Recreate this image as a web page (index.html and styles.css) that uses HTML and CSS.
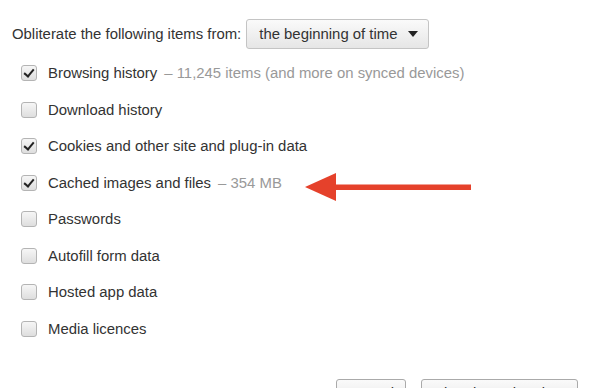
FILE: index.html
```html
<!DOCTYPE html>
<html lang="en-US">
<head>
    <meta charset="utf-8"/>
    <meta name="viewport" content="width=device-width, initial-scale=1"/>
    <title>Clear browsing data</title>
    <link rel="stylesheet" href="styles.css">
</head>
<body>
    <div class="dialog">
        <div class="period-row">
            <span class="period-label">Obliterate the following items from:</span>
            <div class="select">
                <span>the beginning of time</span>
                <span class="caret"></span>
            </div>
        </div>

        <ul class="items">
            <li class="item"><span class="box checked"></span>Browsing history<span class="note">&ndash; 11,245 items (and more on synced devices)</span></li>
            <li class="item"><span class="box"></span>Download history</li>
            <li class="item"><span class="box checked"></span>Cookies and other site and plug-in data</li>
            <li class="item"><span class="box checked"></span>Cached images and files<span class="note">&ndash; 354 MB</span></li>
            <li class="item"><span class="box"></span>Passwords</li>
            <li class="item"><span class="box"></span>Autofill form data</li>
            <li class="item"><span class="box"></span>Hosted app data</li>
            <li class="item"><span class="box"></span>Media licences</li>
        </ul>

        <div class="buttons">
            <button class="button cancel">Cancel</button>
            <button class="button clear">Clear browsing data</button>
        </div>

        <svg class="arrow" width="170" height="34" viewBox="0 0 170 34">
            <polygon points="0,17 31,3 31,31" fill="#e5412b"/>
            <rect x="28" y="14.5" width="138" height="5.5" fill="#e5412b"/>
        </svg>
    </div>
</body>
</html>
```

FILE: styles.css
```css
html, body {
    margin: 0;
    height: 100%;
    overflow: hidden;
    background: #fff;
}

body {
    font-family: "Liberation Sans", Arial, sans-serif;
    font-size: 14.9px;
    color: #333;
}

.dialog {
    position: relative;
    height: 100%;
}

.period-row {
    display: flex;
    align-items: center;
    gap: 5px;
    padding: 19px 0 0 12px;
    height: 30px;
}

.period-label {
    color: #333;
}

.select {
    display: flex;
    align-items: center;
    justify-content: space-between;
    box-sizing: border-box;
    width: 183px;
    height: 30px;
    padding: 0 10px 0 12px;
    border: 1px solid #c4c4c4;
    border-radius: 3px;
    background: linear-gradient(#fafafa, #e6e6e6);
    color: #333;
}

.caret {
    width: 0;
    height: 0;
    border-left: 5px solid transparent;
    border-right: 5px solid transparent;
    border-top: 6px solid #222;
}

.items {
    list-style: none;
    margin: 0;
    padding: 6px 0 0 21px;
}

.item {
    display: flex;
    align-items: center;
    height: 36.5px;
}

.box {
    position: relative;
    box-sizing: border-box;
    width: 16px;
    height: 16px;
    margin-right: 11px;
    border: 1px solid #b4b4b4;
    border-radius: 3px;
    background: linear-gradient(#f6f6f6, #dedede);
    flex-shrink: 0;
}

.box.checked::after {
    content: "";
    position: absolute;
    left: 4px;
    top: 1px;
    width: 4px;
    height: 8px;
    border-right: 2.5px solid #222;
    border-bottom: 2.5px solid #222;
    transform: rotate(40deg);
}

.note {
    color: #999;
    margin-left: 7px;
}

.buttons {
    display: flex;
    justify-content: flex-end;
    gap: 15px;
    padding: 32px 22px 0 0;
}

.button {
    font-family: "Liberation Sans", Arial, sans-serif;
    font-size: 14.9px;
    color: #333;
    height: 28px;
    padding: 0 8px;
    white-space: nowrap;
    border: 1px solid #aaa;
    border-radius: 3px;
    background: linear-gradient(#fafafa, #e6e6e6);
}

.cancel {
    width: 70px;
}

.clear {
    width: 157px;
}

.arrow {
    position: absolute;
    left: 305px;
    top: 170px;
}
```
